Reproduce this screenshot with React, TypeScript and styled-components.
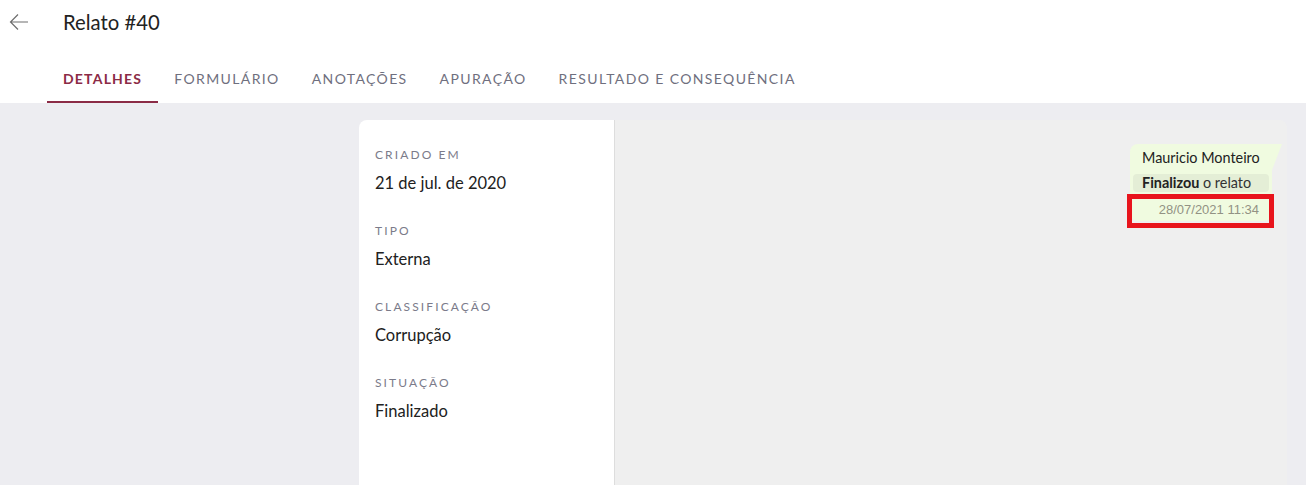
import styled, { createGlobalStyle } from "styled-components";

const GlobalStyle = createGlobalStyle`
  html, body {
    margin: 0;
    padding: 0;
    background: #ededf1;
    font-family: Lato, "Noto Sans", sans-serif;
    color: #212121;
  }
  * {
    box-sizing: border-box;
  }
`;

const tabs = [
  "Detalhes",
  "Formulário",
  "Anotações",
  "Apuração",
  "Resultado e consequência",
];

const fields = [
  { label: "Criado em", value: "21 de jul. de 2020" },
  { label: "Tipo", value: "Externa" },
  { label: "Classificação", value: "Corrupção" },
  { label: "Situação", value: "Finalizado" },
];

const App = () => {
  return (
    <>
      <GlobalStyle />
      <Header>
        <TitleRow>
          <BackButton aria-label="Voltar">
            <svg width="20" height="20" viewBox="0 0 20 20" fill="none">
              <path
                d="M19 10H1.5M9 2.5L1.5 10L9 17.5"
                stroke="#6e6e6e"
                strokeWidth="1.2"
              />
            </svg>
          </BackButton>
          <Title>Relato #40</Title>
        </TitleRow>
        <TabRow>
          {tabs.map((t, i) => (
            <Tab key={t} $active={i === 0}>
              {t}
            </Tab>
          ))}
        </TabRow>
      </Header>
      <Main>
        <Card>
          <DetailsPanel>
            {fields.map((f) => (
              <Field key={f.label}>
                <FieldLabel>{f.label}</FieldLabel>
                <FieldValue>{f.value}</FieldValue>
              </Field>
            ))}
          </DetailsPanel>
          <TimelinePanel>
            <Bubble>
              <Author>Mauricio Monteiro</Author>
              <Message>
                <strong>Finalizou</strong> o relato
              </Message>
              <Timestamp>
                28/07/2021 11:34
                <Highlight />
              </Timestamp>
            </Bubble>
          </TimelinePanel>
        </Card>
      </Main>
    </>
  );
};

const Header = styled.header`
  background: #ffffff;
`;

const TitleRow = styled.div`
  display: flex;
  align-items: center;
  height: 44px;
  padding-left: 9px;
`;

const BackButton = styled.button`
  display: flex;
  align-items: center;
  justify-content: center;
  background: none;
  border: none;
  padding: 0;
  width: 20px;
  height: 20px;
  cursor: pointer;
`;

const Title = styled.h1`
  margin: 0 0 0 34px;
  font-size: 20.3px;
  font-weight: 400;
  color: #222222;
`;

const TabRow = styled.nav`
  display: flex;
  padding-left: 47px;
  margin-top: 11px;
`;

const Tab = styled.div<{ $active?: boolean }>`
  height: 48px;
  padding: 1px 16px 0;
  display: flex;
  align-items: center;
  font-size: 14px;
  text-transform: uppercase;
  letter-spacing: ${(p) => (p.$active ? "1.2px" : "1.38px")};
  font-weight: ${(p) => (p.$active ? 700 : 400)};
  color: ${(p) => (p.$active ? "#8b2b46" : "#6f6f7e")};
  border-bottom: 2px solid ${(p) => (p.$active ? "#8b2b46" : "transparent")};
  cursor: pointer;
`;

const Main = styled.main`
  height: calc(100vh - 103px);
  overflow: hidden;
  padding: 17px 19px 0 359px;
`;

const Card = styled.div`
  display: flex;
  height: 420px;
`;

const DetailsPanel = styled.section`
  width: 256px;
  background: #ffffff;
  border-right: 1px solid #dddddd;
  border-top-left-radius: 8px;
  padding: 27px 16px;
`;

const Field = styled.div`
  margin-bottom: 28px;
`;

const FieldLabel = styled.div`
  font-size: 12px;
  line-height: 16px;
  text-transform: uppercase;
  letter-spacing: 2.1px;
  color: #7b7b8a;
  margin-bottom: 8px;
`;

const FieldValue = styled.div`
  font-size: 16.5px;
  line-height: 24px;
  color: #212121;
`;

const TimelinePanel = styled.section`
  flex: 1;
  background: #efefef;
  border-top-right-radius: 8px;
  padding: 24px 15px;
  display: flex;
  justify-content: flex-end;
  align-items: flex-start;
`;

const Bubble = styled.div`
  position: relative;
  background: #f0fbe0;
  border-radius: 8px 0 8px 8px;
  padding: 3px;
  width: 142px;

  &::after {
    content: "";
    position: absolute;
    top: 0;
    right: -10px;
    width: 0;
    height: 0;
    border-top: 26px solid #f0fbe0;
    border-right: 10px solid transparent;
  }
`;

const Author = styled.div`
  padding: 1px 9px 0;
  font-size: 14.4px;
  line-height: 20px;
  color: #222222;
  white-space: nowrap;
`;

const Message = styled.div`
  margin-top: 6px;
  padding: 0 9px;
  font-size: 14.4px;
  line-height: 18px;
  color: #333333;
  background: #e4eed6;
  border-radius: 4px;
  white-space: nowrap;

  strong {
    font-weight: 700;
    color: #222222;
  }
`;

const Timestamp = styled.div`
  position: relative;
  margin-top: 10px;
  padding-right: 10px;
  text-align: right;
  font-family: "Liberation Sans", Arial, sans-serif;
  font-size: 13px;
  line-height: 16px;
  color: #929284;
`;

const Highlight = styled.span`
  position: absolute;
  top: -8px;
  bottom: -10px;
  left: -6px;
  right: -5px;
  border: 5px solid #e8141c;
  pointer-events: none;
`;

export default App;
